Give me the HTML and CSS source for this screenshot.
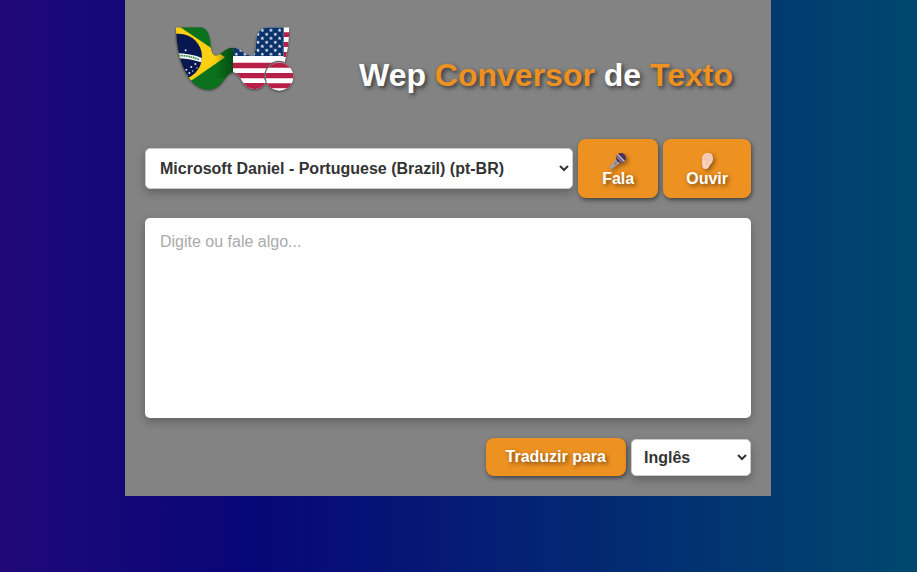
FILE: index.html
```html
<!DOCTYPE html>
<html lang="pt-BR">
<head>
<meta charset="utf-8">
<meta name="viewport" content="width=device-width, initial-scale=1">
<title>Wep Conversor de Texto</title>
<link rel="stylesheet" href="styles.css">
</head>
<body>
<main class="card">
  <header class="header">
    <svg class="logo" viewBox="30 36 360 195" role="img" aria-label="Wep">
      <defs>
        <clipPath id="wing"><path d="M33 37H108Q132 40 136 85C138 116 147 126 158 121C174 112 184 98 203 98C228 98 240 122 262 122C276 116 270 85 276 62Q284 37 310 37H373Q372 100 358 145L303 200C290 226 258 228 240 210C225 192 220 172 203 172C180 172 175 224 130 224C78 224 33 150 33 37Z"/></clipPath>
        <clipPath id="ball"><circle cx="343" cy="185" r="42"/></clipPath>
        <clipPath id="globe"><circle cx="42" cy="125" r="69"/></clipPath>
        <linearGradient id="fold" x1="0" x2="1"><stop offset="0" stop-color="#003a08" stop-opacity="0"/><stop offset="1" stop-color="#002c06" stop-opacity=".55"/></linearGradient>
        <pattern id="stars" width="26" height="24" patternUnits="userSpaceOnUse" x="279" y="39">
          <path fill="#eef3fa" d="M13 1l1.600 3.800 4.200.3-3.200 2.700 1 4.200-3.600-2.300-3.600 2.300 1-4.200-3.200-2.700 4.200-.3z"/>
          <path fill="#eef3fa" d="M0 13l1.600 3.800 4.200.3-3.200 2.700 1 4.200L0 21.700zM26 13l-1.600 3.800-4.200.3 3.200 2.700-1 4.200 3.600-2.300z"/>
        </pattern>
      </defs>
      <g clip-path="url(#wing)">
        <path fill="#0b711c" d="M30 36H204V231H30z"/>
        <path fill="#ffcf12" d="M30 36H45L180 127 76 199 30 225z"/>
        <g clip-path="url(#globe)">
          <path fill="#08174f" d="M30 50H115V200H30z"/>
          <path fill="#f4f7f2" d="M30 115Q72 114 112 129V143Q72 130 30 129z"/>
          <path fill="none" stroke="#3d8c55" stroke-width="5" stroke-dasharray="5 2" d="M42 122Q72 121 102 134"/>
          <g fill="#dce4f5"><circle cx="62" cy="106" r="3"/><circle cx="91" cy="147" r="3"/><circle cx="79" cy="156" r="3"/><circle cx="96" cy="159" r="2"/><circle cx="64" cy="164" r="3"/><circle cx="83" cy="168" r="2"/><circle cx="73" cy="174" r="3"/><circle cx="87" cy="179" r="2"/><circle cx="66" cy="181" r="2"/></g>
        </g>
        <path fill="url(#fold)" d="M150 90H204V190H150z"/>
        <path fill="#fff" d="M204 36H390V231H204z"/>
        <path fill="#b81f46" d="M356 52H390V66H356zM356 81H390V96H356zM356 111H390V126H356zM204 143H390V160H204zM204 174H390V190H204zM204 204H390V224H204z"/>
        <path fill="#0a3268" d="M204 36H356V123H204z"/>
        <path fill="url(#stars)" d="M204 39H354V122H204z"/>
      </g>
      <g clip-path="url(#ball)">
        <path fill="#fff" d="M300 142H390V230H300z"/>
        <path fill="#b81f46" d="M300 142H390V158H300zM300 174H390V190H300zM300 205H390V220H300z"/>
      </g>
      <path d="M358 143A43 43 0 0 0 303 200" fill="none" stroke="#666" stroke-width="4"/>
    </svg>
    <h1 class="title">Wep <span class="accent">Conversor</span> de <span class="accent">Texto</span></h1>
  </header>

  <div class="voice-row">
    <select class="field voice" aria-label="Voz">
      <option>Microsoft Daniel - Portuguese (Brazil) (pt-BR)</option>
    </select>
    <button class="button action" type="button">
      <svg class="icon" viewBox="0 0 18 18" aria-hidden="true">
        <path fill="#a6a09d" d="M8 6L1 14l-1 2 2 1 2-1 8-6z"/>
        <path fill="#77716f" d="M5 12l2-2 1 1-2 2z"/>
        <circle cx="12" cy="6" r="5" fill="#4b315f"/>
        <path fill="#c9c5cf" d="M8 3l1-1 7 7-1 1z"/>
        <path fill="#8b8290" d="M7 5l1-1 6 6-1 1z"/>
      </svg>
      Fala
    </button>
    <button class="button action" type="button">
      <svg class="icon" viewBox="0 0 18 18" aria-hidden="true">
        <path fill="#f8d2bd" d="M4 7C4 3 7 1 10 1c4 0 5 3 5 6 0 4-3 5-4 8-1 2-4 3-6 1-1-2-1-6-1-9z"/>
        <path fill="none" stroke="#ebb9a4" d="M6 8C6 4 8 3 10 3c3 0 3 4 2 6M7 8c2-3 5-1 3 1-2 1 0 2-2 4"/>
      </svg>
      Ouvir
    </button>
  </div>

  <textarea class="text" aria-label="Texto" placeholder="Digite ou fale algo..."></textarea>

  <div class="translate-row">
    <button class="button" type="button">Traduzir para</button>
    <select class="field language" aria-label="Idioma">
      <option>Inglês</option>
    </select>
  </div>
</main>
</body>
</html>
```
FILE: styles.css
```css
* {
  box-sizing: border-box;
}

body {
  margin: 0;
  padding-right: 21px;
  min-height: 100vh;
  font-family: "Liberation Sans", Arial, sans-serif;
  font-size: 16px;
  background: linear-gradient(90deg, #200878 0%, #070678 27%, #00486e 100%);
}

.card {
  max-width: 646px;
  margin: 0 auto;
  padding: 0 20px 20px;
  background: #838383;
}

.header {
  display: flex;
  align-items: center;
  justify-content: space-between;
  padding: 27px 18px 47px 30px;
}

.logo {
  width: 120px;
  height: 65px;
  filter: drop-shadow(0 1px 1px rgba(0, 0, 0, 0.5));
}

.title {
  margin: 30px 0 0;
  font-size: 32px;
  line-height: 32px;
  color: #fff;
  text-shadow: 2px 2px 4px rgba(0, 0, 0, 0.6);
}

.accent {
  color: #ed9121;
}

.voice-row,
.translate-row {
  display: flex;
  align-items: center;
  gap: 5px;
}

.translate-row {
  justify-content: flex-end;
}

.field {
  border: 1px solid #ccc;
  border-radius: 5px;
  background: #fff;
  color: #333;
  font: bold 16px "Liberation Sans", Arial, sans-serif;
  box-shadow: 0 4px 8px rgba(0, 0, 0, 0.25);
}

.voice {
  flex: 1;
  min-width: 0;
  height: 41px;
  padding: 10px;
}

.language {
  width: 120px;
  height: 37px;
  padding: 8px;
}

.button {
  padding: 10px 20px;
  border: 0;
  border-radius: 8px;
  background: #ed9121;
  color: #fff;
  font: bold 16px/18px "Liberation Sans", Arial, sans-serif;
  text-shadow: 2px 2px 4px rgba(0, 0, 0, 0.5);
  box-shadow: 1px 2px 4px rgba(0, 0, 0, 0.5);
}

.action {
  display: flex;
  flex-direction: column;
  align-items: center;
  min-width: 80px;
  padding: 13px 23px 10px;
}

.icon {
  width: 18px;
  height: 18px;
  filter: drop-shadow(2px 2px 2px rgba(0, 0, 0, 0.4));
}

.text {
  display: block;
  width: 100%;
  height: 200px;
  margin: 20px 0;
  padding: 15px;
  border: 0;
  border-radius: 5px;
  background: #fff;
  color: #333;
  font: 16px "Liberation Sans", Arial, sans-serif;
  resize: none;
  box-shadow: 0 4px 8px rgba(0, 0, 0, 0.25);
}

.text::placeholder {
  color: #aaa;
}
```
